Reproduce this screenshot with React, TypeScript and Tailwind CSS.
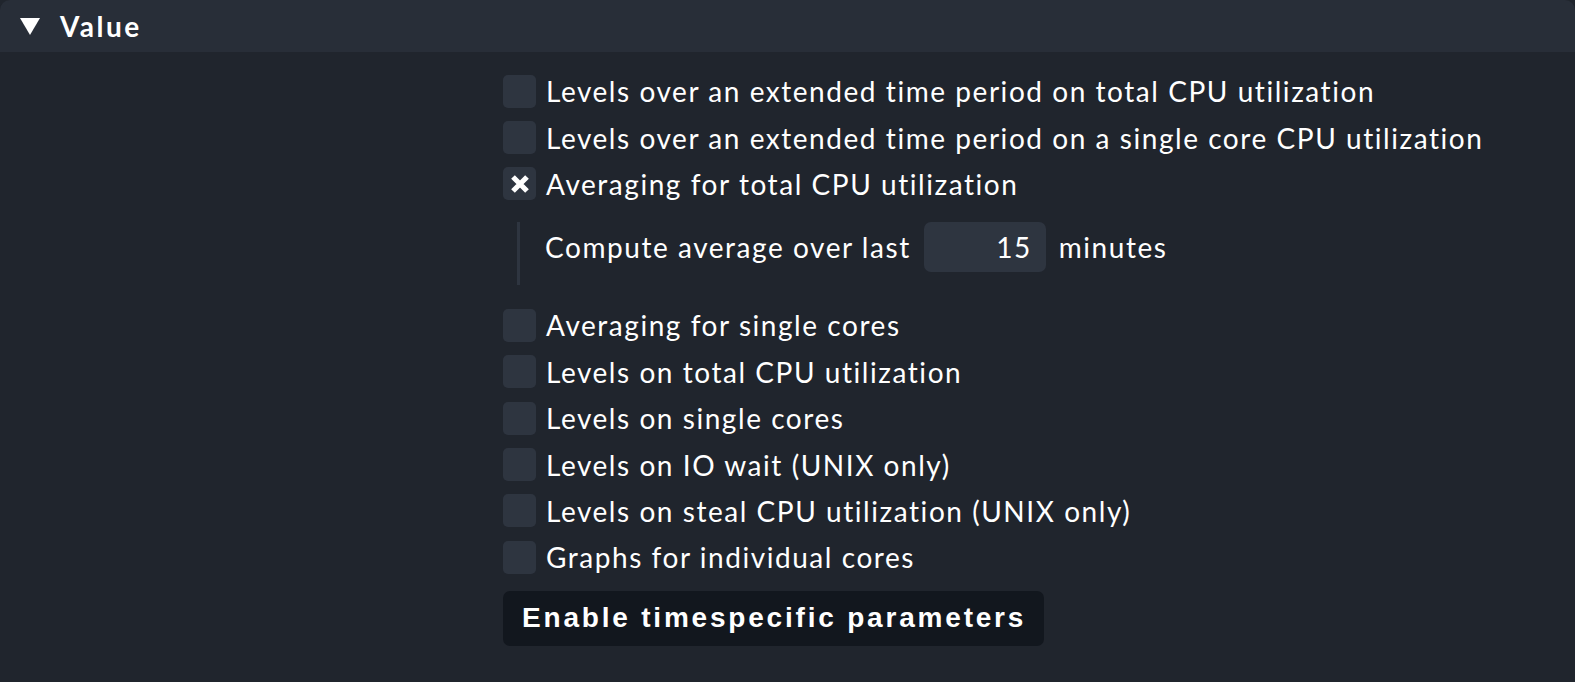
import React from 'react';

const Checkbox = ({ checked = false }: { checked?: boolean }) => (
  <span className="flex h-[33px] w-[33px] shrink-0 items-center justify-center rounded-[5px] bg-[#2e3540] text-white">
    {checked && (
      <svg width="22" height="22" viewBox="0 0 22 22">
        <path d="M4 4 L18 18 M18 4 L4 18" stroke="white" strokeWidth="5.2" strokeLinecap="butt" />
      </svg>
    )}
  </span>
);

const Option = ({ label, checked = false }: { label: string; checked?: boolean }) => (
  <div className="flex h-[46.4px] items-center gap-[10px]">
    <Checkbox checked={checked} />
    <span className="tracking-[1.55px]">{label}</span>
  </div>
);

export default function App() {
  const rest = [
    'Averaging for single cores',
    'Levels on total CPU utilization',
    'Levels on single cores',
    'Levels on IO wait (UNIX only)',
    'Levels on steal CPU utilization (UNIX only)',
    'Graphs for individual cores',
  ];

  return (
    <div className="h-[682px] w-[1575px] bg-[#20252d] font-['Lato','Noto_Sans',sans-serif] text-[28px] text-white">
      <div className="flex h-[52px] items-center gap-[20px] rounded-t-[10px] bg-[#282e38] pl-[20px]">
        <svg width="20" height="17" viewBox="0 0 20 17">
          <path d="M0 0 H20 L10 17 Z" fill="white" />
        </svg>
        <span className="text-[28px] font-bold tracking-[2.5px]">Value</span>
      </div>

      <div className="pl-[503px] pt-[16px]">
        <Option label="Levels over an extended time period on total CPU utilization" />
        <Option label="Levels over an extended time period on a single core CPU utilization" />
        <Option label="Averaging for total CPU utilization" checked />

        <div className="mb-[17px] ml-[14px] mt-[15px] flex h-[63px] border-l-[3px] border-[#2e3540] pl-[25px]">
          <div className="flex h-[50px] items-center gap-[13px]">
            <span className="tracking-[1.55px]">Compute average over last</span>
            <span className="flex h-[50px] w-[122px] items-center justify-end rounded-[7px] bg-[#2e3540] pr-[14px] tracking-[1.55px]">15</span>
            <span className="tracking-[1.55px]">minutes</span>
          </div>
        </div>

        {rest.map((r) => (
          <Option key={r} label={r} />
        ))}

        <button className="mt-[10px] flex h-[55px] w-[541px] items-center rounded-[7px] bg-[#12171e] pl-[19px] font-['Liberation_Sans',Arial,sans-serif] text-[28px] font-bold tracking-[2.8px] text-white">
          Enable timespecific parameters
        </button>
      </div>
    </div>
  );
}
